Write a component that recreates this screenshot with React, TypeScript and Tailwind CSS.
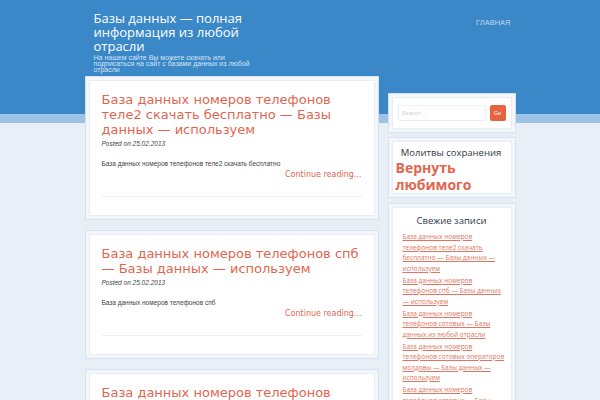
import React from 'react';

const posts = [
  {
    title: 'База данных номеров телефонов теле2 скачать бесплатно — Базы данных — используем',
    excerpt: 'База данных номеров телефонов теле2 скачать бесплатно',
  },
  {
    title: 'База данных номеров телефонов спб — Базы данных — используем',
    excerpt: 'База данных номеров телефонов спб',
  },
  {
    title: 'База данных номеров телефонов сотовых — Базы данных',
    excerpt: 'База данных номеров телефонов сотовых',
  },
];

const recent = [
  'База данных номеров телефонов теле2 скачать бесплатно — Базы данных — используем',
  'База данных номеров телефонов спб — Базы данных — используем',
  'База данных номеров телефонов сотовых — Базы данных из любой отрасли',
  'База данных номеров телефонов сотовых операторов молдовы — Базы данных — используем',
  'База данных номеров телефонов сотовых — Базы данных',
];

const Box: React.FC<{ className?: string; children: React.ReactNode }> = ({ className = '', children }) => (
  <div className={`border border-[#d8e2ec] bg-[#f3f6fa] p-[3px] ${className}`}>
    <div className="h-full border border-[#e7edf3] bg-white">{children}</div>
  </div>
);

const App: React.FC = () => {
  return (
    <div className="h-[400px] overflow-hidden bg-[linear-gradient(to_bottom,#3a88c8_0,#3a88c8_114px,#9cc3e5_114px,#9cc3e5_123px,#e9eff6_123px)] font-['Liberation_Sans',sans-serif]">
      <div className="mx-auto w-[431px]">
        {/* Header */}
        <header className="flex h-[76px] justify-between pl-[9px] pr-[5px] pt-[11px]">
          <div className="w-[175px]">
            <h1 className="font-['Open_Sans',sans-serif] text-[13px] leading-[14px] text-white">
              Базы данных — полная информация из любой отрасли
            </h1>
            <p className="mt-[2px] w-[160px] text-[7px] leading-[6px] text-[#d3e4f4]">
              На нашем сайте Вы можете скачать или подписаться на сайт с базами данных из любой отрасли
            </p>
          </div>
          <nav className="pt-[6px] text-[7.5px] text-[#c3d7ec]">ГЛАВНАЯ</nav>
        </header>

        <div className="flex gap-[9px]">
          {/* Posts */}
          <main className="flex w-[294px] flex-col gap-[10px]">
            {posts.map((p, i) => (
              <Box key={i}>
                <article className="pb-[18px] pl-[12px] pr-[12px] pt-[11px]">
                  <h2 className="font-['DejaVu_Sans',sans-serif] text-[13px] leading-[15px] text-[#e1664f]">
                    {p.title}
                  </h2>
                  <p className="mt-[3px] text-[6.5px] italic leading-[8px] text-[#444]">Posted on 25.02.2013</p>
                  <p className="mt-[12px] text-[6.5px] leading-[8px] text-[#444]">{p.excerpt}</p>
                  <div className="mt-[1px] text-right font-['DejaVu_Sans',sans-serif] text-[8px] leading-[12px] text-[#e1664f]">
                    Continue reading...
                  </div>
                  <div className="mt-[15px] border-t border-[#edf1f5]" />
                </article>
              </Box>
            ))}
          </main>

          {/* Sidebar */}
          <aside className="mt-[17px] flex w-[128px] flex-col gap-[4px]">
            <Box>
              <form className="flex items-center gap-[4px] px-[5px] py-[7px]" onSubmit={(e) => e.preventDefault()}>
                <input
                  placeholder="Search ..."
                  className="h-[16px] w-[88px] border border-[#eceff2] px-[3px] text-[6px] text-[#999] outline-none"
                />
                <button className="h-[16px] w-[16px] rounded-[2px] bg-[#e9623f] text-[5.5px] text-white">Go</button>
              </form>
            </Box>
            <Box>
              <div className="pl-[3px] pr-[4px] pt-[5px] font-['Open_Sans',sans-serif]">
                <h3 className="text-center text-[9.5px] leading-[12px] text-[#2f3a48]">Молитвы сохранения</h3>
                <p className="text-[14px] font-bold leading-[17px] text-[#e1664f]">Вернуть любимого</p>
              </div>
            </Box>
            <Box className="mt-[1px] h-[220px]">
              <div className="pt-[7px] font-['Open_Sans',sans-serif]">
                <h3 className="px-[10px] text-center text-[9.5px] leading-[12px] text-[#2f3a48]">Свежие записи</h3>
                <ul className="mt-[5px] flex flex-col gap-[1.5px] pl-[10px] pr-[3px]">
                  {recent.map((r, i) => (
                    <li key={i} className="text-[6.5px] leading-[10.5px]">
                      <a href="#" className="text-[#e27561] underline">
                        {r}
                      </a>
                    </li>
                  ))}
                </ul>
              </div>
            </Box>
          </aside>
        </div>
      </div>
    </div>
  );
};

export default App;
